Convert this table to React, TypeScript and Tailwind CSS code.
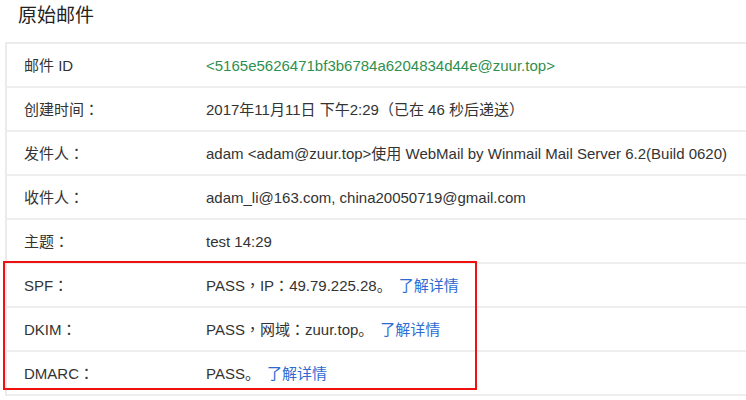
import React from 'react'

const FONT = '"Liberation Sans", "Noto Sans CJK SC", sans-serif'
const TC = '"Noto Sans CJK TC", sans-serif'

type Row = { label: React.ReactNode; value: React.ReactNode }

// 全角标点居中显示（居中字形）
function P({ c }: { c: string }) {
  return <span style={{ fontFamily: TC }}>{c}</span>
}

function Link({ children }: { children: React.ReactNode }) {
  return <span className="ml-[7px] text-[#2d6bd2]">{children}</span>
}

const ROWS: Row[] = [
  {
    label: '邮件 ID',
    value: <span className="text-[#2f8f4e]">&lt;5165e5626471bf3b6784a6204834d44e@zuur.top&gt;</span>,
  },
  {
    label: <>创建时间<P c="：" /></>,
    value: (
      <>
        2017年11月11日 下午2:29<P c="（" />已在 46 秒后递送<P c="）" />
      </>
    ),
  },
  { label: <>发件人<P c="：" /></>, value: 'adam <adam@zuur.top>使用 WebMail by Winmail Mail Server 6.2(Build 0620)' },
  { label: <>收件人<P c="：" /></>, value: 'adam_li@163.com, china20050719@gmail.com' },
  { label: <>主题<P c="：" /></>, value: 'test 14:29' },
  {
    label: <>SPF<P c="：" /></>,
    value: (
      <>
        PASS<P c="，" />IP<P c="：" />49.79.225.28。<Link>了解详情</Link>
      </>
    ),
  },
  {
    label: <>DKIM<P c="：" /></>,
    value: (
      <>
        PASS<P c="，" />网域<P c="：" />zuur.top。<Link>了解详情</Link>
      </>
    ),
  },
  {
    label: <>DMARC<P c="：" /></>,
    value: (
      <>
        PASS。<Link>了解详情</Link>
      </>
    ),
  },
]

export default function App() {
  return (
    <div className="relative w-[746px] h-[400px] overflow-hidden bg-white text-[#333333]" style={{ fontFamily: FONT }}>
      {/* 标题 */}
      <div className="h-[42px] pl-[18px] pt-[2px] text-[19px] leading-[28px] text-[#222222]">原始邮件</div>

      {/* 邮件信息表 */}
      <div className="ml-[5px] w-[760px] border-t-2 border-l-2 border-[#ebebeb]">
        {ROWS.map((row, i) => (
          <div key={i} className="flex h-[44px] items-center border-b-2 border-[#eeeeee] pt-[2px] text-[15px]">
            <div className="w-[199px] shrink-0 pl-[17px]">{row.label}</div>
            <div className="whitespace-nowrap">{row.value}</div>
          </div>
        ))}
      </div>

      {/* 红框标注 */}
      <div className="absolute left-[3px] top-[261px] h-[129px] w-[474px] border-2 border-[#f01010]" />
    </div>
  )
}
